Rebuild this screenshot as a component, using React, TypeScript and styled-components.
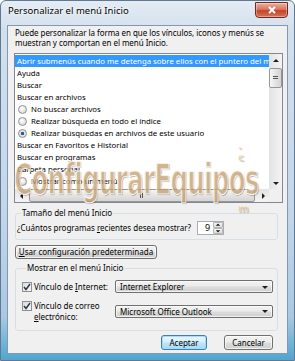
import styled, { createGlobalStyle } from "styled-components";

const GlobalStyle = createGlobalStyle`
  html, body { margin: 0; padding: 0; background: #ffffff; }
  #root { width: 295px; height: 361px; }
`;

type Item = { label: string; radio?: boolean; checked?: boolean; selected?: boolean };

const items: Item[] = [
  { label: "Abrir submenús cuando me detenga sobre ellos con el puntero del mouse", selected: true },
  { label: "Ayuda" },
  { label: "Buscar" },
  { label: "Buscar en archivos" },
  { label: "No buscar archivos", radio: true },
  { label: "Realizar búsqueda en todo el índice", radio: true },
  { label: "Realizar búsquedas en archivos de este usuario", radio: true, checked: true },
  { label: "Buscar en Favoritos e Historial" },
  { label: "Buscar en programas" },
  { label: "Carpeta personal" },
  { label: "Mostrar como un menú", radio: true },
  { label: "Mostrar como un vínculo", radio: true, checked: true },
];

function Arrow({ dir }: { dir: "up" | "down" | "left" | "right" }) {
  const pts = {
    up: "1,5 4,2 7,5",
    down: "1,3 4,6 7,3",
    left: "5,1 2,4 5,7",
    right: "3,1 6,4 3,7",
  }[dir];
  return (
    <svg width="8" height="8" viewBox="0 0 8 8">
      <polygon points={pts} fill="#1e1e1e" />
    </svg>
  );
}

function Check() {
  return (
    <svg width="8" height="8" viewBox="0 0 8 8">
      <path d="M1 4 L3 6.5 L7 1" fill="none" stroke="#22364e" strokeWidth="1.4" />
    </svg>
  );
}

function App() {
  return (
    <>
      <GlobalStyle />
      <Window>
        <TitleBar>
          <Title>Personalizar el menú Inicio</Title>
          <CloseButton>
            <svg width="10" height="8" viewBox="0 0 10 8">
              <path d="M2 1 L8 7 M8 1 L2 7" stroke="#fff" strokeWidth="2" />
            </svg>
          </CloseButton>
        </TitleBar>

        <Client>
          <Intro>
            Puede personalizar la forma en que los vínculos, iconos y menús se muestran y
            comportan en el menú Inicio.
          </Intro>

          <ListBox>
            <ListItems>
              {items.map((it, i) => (
                <Row key={i} $selected={it.selected} $radio={it.radio}>
                  {it.radio && <Radio $checked={it.checked} />}
                  {it.label}
                </Row>
              ))}
            </ListItems>
            <VScroll>
              <ScrollButton>
                <Arrow dir="up" />
              </ScrollButton>
              <VThumb>
                <Grip $vertical />
              </VThumb>
              <Track />
              <ScrollButton>
                <Arrow dir="down" />
              </ScrollButton>
            </VScroll>
            <HScroll>
              <ScrollButton>
                <Arrow dir="left" />
              </ScrollButton>
              <HThumb>
                <Grip />
              </HThumb>
              <ScrollButton>
                <Arrow dir="right" />
              </ScrollButton>
            </HScroll>
            <Corner />
          </ListBox>

          <Group>
            <Legend>Tamaño del menú Inicio</Legend>
            <SizeRow>
              <span>
                ¿Cuántos programas <u>r</u>ecientes desea mostrar?
              </span>
              <Spinner>
                <SpinValue>9</SpinValue>
                <SpinButtons>
                  <SpinButton>
                    <Arrow dir="up" />
                  </SpinButton>
                  <SpinButton>
                    <Arrow dir="down" />
                  </SpinButton>
                </SpinButtons>
              </Spinner>
            </SizeRow>
          </Group>

          <DefaultsButton>
            <u>U</u>sar configuración predeterminada
          </DefaultsButton>

          <Group $tall>
            <Legend>Mostrar en el menú Inicio</Legend>
            <LinkGrid>
              <CheckLabel>
                <CheckBox>
                  <Check />
                </CheckBox>
                <span>
                  Vínculo de <u>I</u>nternet:
                </span>
              </CheckLabel>
              <Combo>
                <span>Internet Explorer</span>
                <Arrow dir="down" />
              </Combo>
              <CheckLabel>
                <CheckBox>
                  <Check />
                </CheckBox>
                <span>
                  Vínculo de correo
                  <br />
                  <u>e</u>lectrónico:
                </span>
              </CheckLabel>
              <Combo>
                <span>Microsoft Office Outlook</span>
                <Arrow dir="down" />
              </Combo>
            </LinkGrid>
          </Group>

          <Footer>
            <PushButton $primary>Aceptar</PushButton>
            <PushButton>Cancelar</PushButton>
          </Footer>
        </Client>

        <Watermark>ConfigurarEquipos</Watermark>
        <WatermarkDot $top={143}>·</WatermarkDot>
        <WatermarkDot $top={152}>c</WatermarkDot>
        <WatermarkDot $top={203}>m</WatermarkDot>
      </Window>
    </>
  );
}

const Window = styled.div`
  position: relative;
  width: 295px;
  height: 361px;
  box-sizing: border-box;
  display: flex;
  flex-direction: column;
  padding: 0 6px 6px 6px;
  border: 1px solid #5f7893;
  border-radius: 6px 6px 0 0;
  background: linear-gradient(180deg, #e4ecf4 0%, #d3e0ec 8%, #c3d6e8 60%, #a9c8e2 88%, #4fa6cf 100%);
  font-family: "Noto Sans", "Open Sans", sans-serif;
  font-size: 8px;
  color: #000;
  overflow: hidden;
`;

const TitleBar = styled.div`
  height: 24px;
  display: flex;
  justify-content: space-between;
  align-items: flex-start;
`;

const Title = styled.div`
  margin: 4px 0 0 1px;
  font-size: 9.5px;
  line-height: 12px;
  text-shadow: 0 0 4px #ffffff, 0 0 2px #ffffff;
`;

const CloseButton = styled.div`
  width: 33px;
  height: 16px;
  margin-top: 1px;
  box-sizing: border-box;
  border: 1px solid #6e2a1f;
  border-radius: 0 0 4px 4px;
  background: linear-gradient(180deg, #eab1a2 0%, #d8775e 45%, #c2432a 55%, #d4765a 100%);
  display: flex;
  align-items: center;
  justify-content: center;
  box-shadow: inset 0 0 0 1px rgba(255, 255, 255, 0.35);
`;

const Client = styled.div`
  flex: 1;
  display: flex;
  flex-direction: column;
  border: 1px solid #8399b2;
  background: #f0f0f0;
`;

const Intro = styled.p`
  margin: 2px 8px 0 7px;
  line-height: 10px;
  letter-spacing: -0.05px;
`;

const ListBox = styled.div`
  margin: 5px 4px 0 6px;
  height: 150px;
  box-sizing: border-box;
  border: 1px solid #828790;
  background: #fff;
  display: grid;
  grid-template-columns: 1fr 13px;
  grid-template-rows: 1fr 13px;
  overflow: hidden;
`;

const ListItems = styled.div`
  overflow: hidden;
  padding-top: 1px;
`;

const Row = styled.div<{ $selected?: boolean; $radio?: boolean }>`
  height: 12px;
  display: flex;
  align-items: center;
  gap: 4px;
  padding-left: ${(p) => (p.$radio ? 3 : 2)}px;
  white-space: nowrap;
  font-size: 7.8px;
  background: ${(p) => (p.$selected ? "#3399ff" : "transparent")};
  color: ${(p) => (p.$selected ? "#fff" : "#000")};
`;

const Radio = styled.span<{ $checked?: boolean }>`
  flex: none;
  width: 9px;
  height: 9px;
  box-sizing: border-box;
  border-radius: 50%;
  border: 1px solid #8e8f8f;
  background: ${(p) =>
    p.$checked
      ? "radial-gradient(circle, #1c4f73 0%, #2b6d9c 30%, #e8e8e8 42%, #d4d4d4 100%)"
      : "radial-gradient(circle at 40% 35%, #ffffff 0%, #e6e6e6 55%, #cfcfcf 100%)"};
`;

const VScroll = styled.div`
  display: flex;
  flex-direction: column;
  background: linear-gradient(90deg, #e3e3e3, #f4f4f4);
`;

const ScrollButton = styled.div`
  flex: none;
  width: 13px;
  height: 13px;
  display: flex;
  align-items: center;
  justify-content: center;
`;

const VThumb = styled.div`
  flex: none;
  height: 20px;
  margin: 1px 0 0 0;
  box-sizing: border-box;
  border: 1px solid #979797;
  border-radius: 2px;
  background: linear-gradient(90deg, #f6f6f6, #e2e2e2 55%, #d4d4d4);
  display: flex;
  align-items: center;
  justify-content: center;
`;

const Track = styled.div`
  flex: 1;
`;

const HScroll = styled.div`
  display: flex;
  background: linear-gradient(180deg, #e3e3e3, #f4f4f4);
`;

const HThumb = styled.div`
  flex: 1;
  margin: 0 1px;
  box-sizing: border-box;
  border: 1px solid #979797;
  border-radius: 2px;
  background: linear-gradient(180deg, #f6f6f6, #e2e2e2 55%, #d4d4d4);
  display: flex;
  align-items: center;
  justify-content: center;
`;

const Grip = styled.span<{ $vertical?: boolean }>`
  width: ${(p) => (p.$vertical ? 5 : 4)}px;
  height: ${(p) => (p.$vertical ? 4 : 5)}px;
  background: ${(p) =>
    p.$vertical
      ? "repeating-linear-gradient(180deg, #555 0 1px, transparent 1px 2px)"
      : "repeating-linear-gradient(90deg, #555 0 1px, transparent 1px 2px)"};
`;

const Corner = styled.div`
  background: #f0f0f0;
`;

const Group = styled.fieldset<{ $tall?: boolean }>`
  margin: ${(p) => (p.$tall ? "4px 9px 0 7px" : "5px 9px 0 7px")};
  padding: ${(p) => (p.$tall ? "7px 4px 8px 6px" : "3px 4px 4px 1px")};
  border: 1px solid #d5dfe5;
  border-radius: 3px;
  min-width: 0;
`;

const Legend = styled.legend`
  margin-left: 4px;
  padding: 0 1px;
  line-height: 10px;
  font-size: 8px;
`;

const SizeRow = styled.div`
  display: flex;
  align-items: center;
  gap: 6px;
  line-height: 10px;
`;

const Spinner = styled.div`
  width: 27px;
  height: 14px;
  box-sizing: border-box;
  border: 1px solid #abadb3;
  background: #fff;
  display: flex;
`;

const SpinValue = styled.div`
  flex: 1;
  text-align: right;
  padding-right: 3px;
  line-height: 12px;
  font-size: 9px;
`;

const SpinButtons = styled.div`
  width: 10px;
  display: flex;
  flex-direction: column;
`;

const SpinButton = styled.div`
  flex: 1;
  box-sizing: border-box;
  border: 1px solid #b5b5b5;
  border-radius: 1px;
  background: linear-gradient(180deg, #f6f6f6, #dcdcdc);
  display: flex;
  align-items: center;
  justify-content: center;
  overflow: hidden;
  & svg {
    width: 6px;
    height: 6px;
  }
`;

const buttonFace = `
  box-sizing: border-box;
  border: 1px solid #707070;
  border-radius: 3px;
  background: linear-gradient(180deg, #f2f2f2 0%, #ebebeb 48%, #dddddd 52%, #cfcfcf 100%);
  box-shadow: inset 0 0 0 1px rgba(255, 255, 255, 0.7);
  font-family: "Noto Sans", "Open Sans", sans-serif;
  font-size: 8px;
  color: #000;
`;

const DefaultsButton = styled.div`
  ${buttonFace}
  margin: 5px 0 0 7px;
  width: 142px;
  height: 14px;
  line-height: 12px;
  text-align: center;
`;

const LinkGrid = styled.div`
  display: grid;
  grid-template-columns: 93px 158px;
  row-gap: 7px;
  align-items: center;
`;

const CheckLabel = styled.div`
  display: flex;
  align-items: flex-start;
  gap: 2px;
  line-height: 11px;
`;

const CheckBox = styled.span`
  flex: none;
  width: 10px;
  height: 10px;
  margin-top: 1px;
  box-sizing: border-box;
  border: 1px solid #8f8f8f;
  background: linear-gradient(135deg, #dcdcdc, #f7f7f7);
  display: flex;
  align-items: center;
  justify-content: center;
`;

const Combo = styled.div`
  ${buttonFace}
  height: 13px;
  border-radius: 2px;
  display: flex;
  align-items: center;
  justify-content: space-between;
  padding: 0 3px 0 4px;
  line-height: 11px;
`;

const Footer = styled.div`
  display: flex;
  justify-content: flex-end;
  gap: 17px;
  margin: 4px 14px 0 0;
`;

const PushButton = styled.div<{ $primary?: boolean }>`
  ${buttonFace}
  width: ${(p) => (p.$primary ? 46 : 49)}px;
  height: 15px;
  line-height: 13px;
  text-align: center;
  ${(p) =>
    p.$primary &&
    `
    border-color: #3c7fb1;
    background: linear-gradient(180deg, #eaf6fd 0%, #d9f0fc 48%, #bee6fd 52%, #a7d9f5 100%);
    box-shadow: inset 0 0 0 1px rgba(160, 220, 255, 0.9);
  `}
`;

const Watermark = styled.div`
  position: absolute;
  left: 13px;
  top: 157px;
  font-family: "DejaVu Sans", sans-serif;
  font-weight: bold;
  font-size: 42px;
  line-height: 44px;
  letter-spacing: -1px;
  color: rgba(245, 200, 140, 0.62);
  -webkit-text-stroke: 1.2px rgba(255, 255, 255, 0.9);
  text-shadow: 1px 1px 1px rgba(0, 0, 0, 0.4);
  transform: scaleX(0.58);
  transform-origin: left top;
  white-space: nowrap;
  pointer-events: none;
`;

const WatermarkDot = styled.div<{ $top: number }>`
  position: absolute;
  left: 237px;
  top: ${(p) => p.$top}px;
  font-family: "DejaVu Sans", sans-serif;
  font-weight: bold;
  font-size: 10px;
  line-height: 10px;
  color: rgba(240, 190, 120, 0.65);
  -webkit-text-stroke: 0.5px rgba(255, 255, 255, 0.8);
  text-shadow: 1px 1px 1px rgba(0, 0, 0, 0.3);
`;

export default App;
